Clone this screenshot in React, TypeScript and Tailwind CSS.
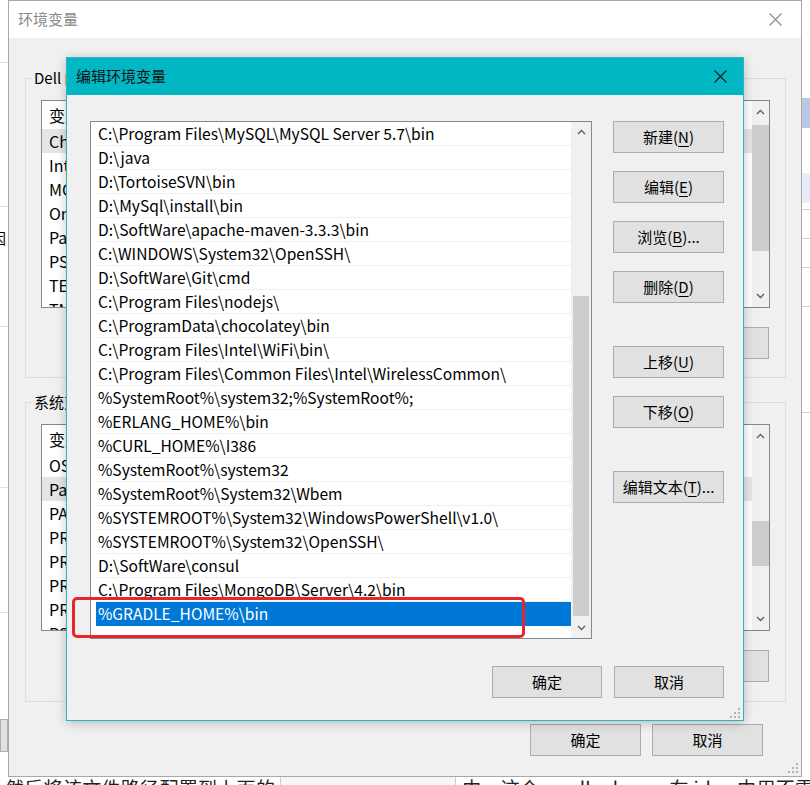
import clsx from "clsx";
import type { ReactNode } from "react";

const paths = [
  "C:\\Program Files\\MySQL\\MySQL Server 5.7\\bin",
  "D:\\java",
  "D:\\TortoiseSVN\\bin",
  "D:\\MySql\\install\\bin",
  "D:\\SoftWare\\apache-maven-3.3.3\\bin",
  "C:\\WINDOWS\\System32\\OpenSSH\\",
  "D:\\SoftWare\\Git\\cmd",
  "C:\\Program Files\\nodejs\\",
  "C:\\ProgramData\\chocolatey\\bin",
  "C:\\Program Files\\Intel\\WiFi\\bin\\",
  "C:\\Program Files\\Common Files\\Intel\\WirelessCommon\\",
  "%SystemRoot%\\system32;%SystemRoot%;",
  "%ERLANG_HOME%\\bin",
  "%CURL_HOME%\\I386",
  "%SystemRoot%\\system32",
  "%SystemRoot%\\System32\\Wbem",
  "%SYSTEMROOT%\\System32\\WindowsPowerShell\\v1.0\\",
  "%SYSTEMROOT%\\System32\\OpenSSH\\",
  "D:\\SoftWare\\consul",
  "C:\\Program Files\\MongoDB\\Server\\4.2\\bin",
  "%GRADLE_HOME%\\bin",
];

const userVars = [
  ["ChocolateyLastPathUpdate", "132213456789012345"],
  ["IntelliJ IDEA", "D:\\IntelliJ IDEA 2019.3\\bin;"],
  ["MOZ_PLUGIN_PATH", "C:\\Program Files (x86)\\Foxit Software\\plugins\\"],
  ["OneDrive", "C:\\Users\\Dell\\OneDrive"],
  ["Path", "C:\\Users\\Dell\\AppData\\Local\\Microsoft\\WindowsApps;"],
  ["PSModulePath", "%ProgramFiles%\\WindowsPowerShell\\Modules"],
  ["TEMP", "%USERPROFILE%\\AppData\\Local\\Temp"],
  ["TMP", "%USERPROFILE%\\AppData\\Local\\Temp"],
];

const sysVars = [
  ["OS", "Windows_NT"],
  ["Path", "C:\\Program Files\\MySQL\\MySQL Server 5.7\\bin;D:\\java;"],
  ["PATHEXT", ".COM;.EXE;.BAT;.CMD;.VBS;.VBE;.JS;.JSE;.WSF;.WSH;.MSC"],
  ["PROCESSOR_ARCHITECTURE", "AMD64"],
  ["PROCESSOR_IDENTIFIER", "Intel64 Family 6 Model 142 Stepping 10"],
  ["PROCESSOR_LEVEL", "6"],
  ["PROCESSOR_REVISION", "8e0a"],
  ["PSModulePath", "%ProgramFiles%\\WindowsPowerShell\\Modules"],
];

function ChevUp() {
  return (
    <svg width="9" height="6" viewBox="0 0 9 6">
      <path d="M1 5 L4.5 1.5 L8 5" stroke="#606060" strokeWidth="1.4" fill="none" />
    </svg>
  );
}

function ChevDown() {
  return (
    <svg width="9" height="6" viewBox="0 0 9 6">
      <path d="M1 1 L4.5 4.5 L8 1" stroke="#606060" strokeWidth="1.4" fill="none" />
    </svg>
  );
}

function CloseX({ color }: { color: string }) {
  return (
    <svg width="13" height="13" viewBox="0 0 13 13">
      <path d="M0.5 0.5 L12.5 12.5 M12.5 0.5 L0.5 12.5" stroke={color} strokeWidth="1.1" fill="none" />
    </svg>
  );
}

function Grip() {
  return (
    <svg width="10" height="10" viewBox="0 0 10 10">
      {[
        [8, 0],
        [8, 4],
        [4, 4],
        [8, 8],
        [4, 8],
        [0, 8],
      ].map(([x, y]) => (
        <rect key={`${x}-${y}`} x={x} y={y} width="2" height="2" fill="#b4b4b4" />
      ))}
    </svg>
  );
}

function Btn({ children, className }: { children?: ReactNode; className?: string }) {
  return (
    <div
      className={clsx(
        "flex h-[32px] items-center justify-center border border-[#adadad] bg-[#e1e1e1] text-[15px] text-black",
        className,
      )}
    >
      {children}
    </div>
  );
}

function Key({ k }: { k: string }) {
  return <span className="underline underline-offset-[3px]">{k}</span>;
}

function VarList({
  rows,
  active,
  thumbTop,
  thumbH,
  height,
}: {
  rows: string[][];
  active: number;
  thumbTop: number;
  thumbH: number;
  height: string;
}) {
  return (
    <div className={clsx("flex border border-[#828790] bg-white", height)}>
      <div className="flex-1 overflow-hidden text-[16px] text-black">
        <div className="flex h-[28px] items-center pl-[7px]">
          <span className="w-[200px]">变量</span>
          <span>值</span>
        </div>
        {rows.map(([name, value], i) => (
          <div
            key={name}
            className={clsx("flex h-[24px] items-center pl-[7px]", i === active && "bg-[#e5e5e5]")}
          >
            <span className="w-[200px] shrink-0 truncate">{name}</span>
            <span className="truncate">{value}</span>
          </div>
        ))}
      </div>
      <div className="flex w-[17px] flex-col bg-[#f0f0f0]">
        <div className="flex h-[22px] items-center justify-center">
          <ChevUp />
        </div>
        <div className="flex-1">
          <div className="bg-[#cdcdcd]" style={{ marginTop: thumbTop, height: thumbH }} />
        </div>
        <div className="flex h-[22px] items-center justify-center">
          <ChevDown />
        </div>
      </div>
    </div>
  );
}

function GroupBox({
  label,
  rows,
  active,
  thumbTop,
  thumbH,
  listH,
  className,
}: {
  label: string;
  rows: string[][];
  active: number;
  thumbTop: number;
  thumbH: number;
  listH: string;
  className?: string;
}) {
  return (
    <div className={clsx("relative h-[300px] border border-[#dcdcdc] px-[15px] pt-[21px]", className)}>
      <span className="absolute -top-[11px] left-[6px] bg-[#f0f0f0] px-[2px] text-[15px] leading-[20px] text-black">
        {label}
      </span>
      <VarList rows={rows} active={active} thumbTop={thumbTop} thumbH={thumbH} height={listH} />
      <div className="mt-[19px] flex justify-end gap-[10px] pr-[1px]">
        <Btn className="w-[110px]">
          新建(<Key k="N" />)...
        </Btn>
        <Btn className="w-[110px]">
          编辑(<Key k="E" />)...
        </Btn>
        <Btn className="w-[110px]">
          删除(<Key k="D" />)
        </Btn>
      </div>
    </div>
  );
}

function OuterDialog() {
  return (
    <div className="absolute left-[8px] top-0 flex h-[777px] w-[794px] flex-col border border-[#a8a8a8] bg-[#f0f0f0]">
      <div className="flex h-[37px] items-center justify-between bg-white pl-[9px] pr-[19px]">
        <span className="text-[15px] text-[#8a8a8a]">环境变量</span>
        <CloseX color="#8a8a8a" />
      </div>
      <div className="flex flex-1 flex-col pl-[16px] pr-[15px]">
        <GroupBox
          label="Dell 的用户变量(U)"
          rows={userVars}
          active={0}
          thumbTop={2}
          thumbH={126}
          listH="h-[208px]"
          className="mt-[40px]"
        />
        <GroupBox
          label="系统变量(S)"
          rows={sysVars}
          active={1}
          thumbTop={74}
          thumbH={45}
          listH="h-[207px]"
          className="mt-[24px]"
        />
        <div className="mt-[22px] flex justify-end gap-[11px] pr-[23px]">
          <Btn className="w-[111px]">确定</Btn>
          <Btn className="w-[111px]">取消</Btn>
        </div>
        <div className="-mr-[12px] mt-auto flex justify-end pb-[3px]">
          <Grip />
        </div>
      </div>
    </div>
  );
}

function EditDialog() {
  return (
    <div className="absolute left-[66px] top-[57px] flex h-[664px] w-[678px] flex-col border border-[#2bb5c0] bg-[#f0f0f0] shadow-[0_2px_10px_rgba(0,0,0,0.22)]">
      <div className="flex h-[37px] items-center justify-between bg-[#00b7c3] pl-[9px] pr-[16px]">
        <span className="text-[15px] text-[#111]">编辑环境变量</span>
        <CloseX color="#1a1a1a" />
      </div>
      <div className="flex flex-1 flex-col pl-[23px] pr-[18px] pt-[26px]">
        <div className="flex">
          <div className="flex h-[518px] w-[502px] border border-[#828790] bg-white">
            <div className="flex-1 pl-[5px] text-[15.6px] text-black">
              {paths.map((p, i) => {
                const selected = i === paths.length - 1;
                return (
                  <div
                    key={p}
                    className={clsx(
                      "flex h-[24px] items-center whitespace-nowrap px-[2px]",
                      selected ? "bg-[#0078d7] text-white" : "border-b border-[#efefef]",
                    )}
                  >
                    {p}
                  </div>
                );
              })}
            </div>
            <div className="flex w-[20px] flex-col bg-[#f0f0f0]">
              <div className="flex h-[20px] items-center justify-center">
                <ChevUp />
              </div>
              <div className="flex flex-1 flex-col justify-end px-[2px] pb-[2px]">
                <div className="h-[320px] bg-[#cdcdcd]" />
              </div>
              <div className="flex h-[20px] items-center justify-center">
                <ChevDown />
              </div>
            </div>
          </div>
          <div className="ml-[21px] flex flex-col">
            <Btn className="w-[111px]">
              新建(<Key k="N" />)
            </Btn>
            <Btn className="mt-[18px] w-[111px]">
              编辑(<Key k="E" />)
            </Btn>
            <Btn className="mt-[18px] w-[111px]">
              浏览(<Key k="B" />)...
            </Btn>
            <Btn className="mt-[18px] w-[111px]">
              删除(<Key k="D" />)
            </Btn>
            <Btn className="mt-[43px] w-[111px]">
              上移(<Key k="U" />)
            </Btn>
            <Btn className="mt-[18px] w-[111px]">
              下移(<Key k="O" />)
            </Btn>
            <Btn className="mt-[43px] w-[111px]">
              编辑文本(<Key k="T" />)...
            </Btn>
          </div>
        </div>
        <div className="mt-[27px] flex justify-end gap-[12px] pr-[1px]">
          <Btn className="w-[110px]">确定</Btn>
          <Btn className="w-[110px]">取消</Btn>
        </div>
        <div className="-mr-[15px] mt-auto flex justify-end pb-[2px]">
          <Grip />
        </div>
      </div>
    </div>
  );
}

export default function App() {
  return (
    <div className="relative h-[785px] w-[810px] overflow-hidden bg-white font-['Noto_Sans_CJK_SC','Noto_Sans',sans-serif]">
      <div className="flex h-[776px]">
        <div className="flex w-[8px] flex-col">
          <div className="h-[63px] border-b border-[#d9d9d9]" />
          <div className="h-[144px] border-b border-[#d9d9d9]" />
          <div className="h-[120px] overflow-hidden border-b border-[#d9d9d9] pt-[20px]">
            <span className="-ml-[9px] block text-[15px] text-black">因</span>
          </div>
          <div className="h-[161px] border-b border-[#e0e0e0]" />
          <div className="h-[125px] border-b border-[#e0e0e0]" />
          <div className="mt-[106px] h-[33px] border border-[#adadad] bg-[#e1e1e1]" />
        </div>
        <div className="flex-1" />
        <div className="flex w-[9px] flex-col">
          <div className="mt-[98px] h-[30px] bg-[#b9c6e4]" />
          <div className="mt-[45px] h-[30px] bg-[#e7eef9]" />
          <div className="h-[7px] border-b border-[#d0d0d0]" />
          <div className="h-[29px] border-b border-[#d0d0d0]" />
          <div className="h-[29px] border-b border-[#d0d0d0]" />
          <div className="h-[39px] border-b border-[#d0d0d0]" />
          <div className="h-[106px] border-b border-[#d0d0d0]" />
        </div>
      </div>
      <div className="flex items-start whitespace-nowrap pl-[5px] text-[19px] leading-none tracking-[0.3px] text-[#222]">
        <span className="shrink-0 pt-[2px]">然后将该文件路径配置到上面的</span>
        <span className="ml-[5px] h-[20px] w-[176px] shrink-0 border border-[#cccccc] bg-[#f6f6f6]" />
        <span className="ml-[6px] shrink-0 pt-[2px]">中，这个 gradle_home 在 idea 中用不需要</span>
      </div>

      <OuterDialog />
      <EditDialog />

      <div className="absolute left-[72px] top-[597px] h-[41px] w-[453px] rounded-[5px] border-[3px] border-[#e8262a]" />
    </div>
  );
}
